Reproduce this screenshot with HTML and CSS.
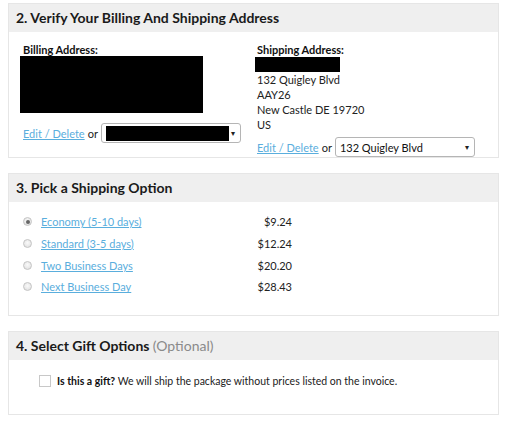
FILE: index.html
```html
<!DOCTYPE html>
<html>
<head>
<meta charset="utf-8">
<link rel="stylesheet" href="styles.css">
</head>
<body>
<div class="page">
  <section class="panel">
    <h2 class="panel-head">2. Verify Your Billing And Shipping Address</h2>
    <div class="panel-body addr-body">
      <div class="addr-col billing">
        <div class="addr-label">Billing Address:</div>
        <div class="redact redact-billing"></div>
        <div class="addr-actions">
          <a class="link" href="#">Edit / Delete</a><span class="or">or</span>
          <div class="select select-billing"><span class="redact redact-select"></span><span class="caret">&#9662;</span></div>
        </div>
      </div>
      <div class="addr-col shipping">
        <div class="addr-label">Shipping Address:</div>
        <div class="redact redact-name"></div>
        <div class="addr-lines">
          <div>132 Quigley Blvd</div>
          <div>AAY26</div>
          <div>New Castle DE 19720</div>
          <div>US</div>
        </div>
        <div class="addr-actions">
          <a class="link" href="#">Edit / Delete</a><span class="or">or</span>
          <div class="select select-shipping"><span class="select-text">132 Quigley Blvd</span><span class="caret">&#9662;</span></div>
        </div>
      </div>
    </div>
  </section>

  <section class="panel">
    <h2 class="panel-head">3. Pick a Shipping Option</h2>
    <div class="panel-body ship-body">
      <div class="ship-row"><span class="radio checked"></span><a class="link" href="#">Economy (5-10 days)</a><span class="price">$9.24</span></div>
      <div class="ship-row"><span class="radio"></span><a class="link" href="#">Standard (3-5 days)</a><span class="price">$12.24</span></div>
      <div class="ship-row"><span class="radio"></span><a class="link" href="#">Two Business Days</a><span class="price">$20.20</span></div>
      <div class="ship-row"><span class="radio"></span><a class="link" href="#">Next Business Day</a><span class="price">$28.43</span></div>
    </div>
  </section>

  <section class="panel">
    <h2 class="panel-head">4. Select Gift Options <span class="optional">(Optional)</span></h2>
    <div class="panel-body gift-body">
      <span class="checkbox"></span>
      <span class="gift-text"><b>Is this a gift?</b> We will ship the package without prices listed on the invoice.</span>
    </div>
  </section>
</div>
</body>
</html>
```

FILE: styles.css
```css
* { box-sizing: border-box; }
html, body { margin: 0; padding: 0; background: #fff; }
body {
  font-family: "Lato", "Open Sans", sans-serif;
  color: #222;
}
.page {
  padding: 3px 0 0 8px;
  width: 499px;
  display: flex;
  flex-direction: column;
  gap: 15px;
}
.panel {
  border: 1px solid #e6e6e6;
  background: #fff;
}
.panel-head {
  margin: 0;
  height: 28px;
  background: #efefef;
  padding: 0 0 0 7px;
  font-size: 14px;
  font-weight: 700;
  line-height: 27px;
  color: #1a1a1a;
}
.optional { font-weight: 400; color: #8a8a8a; }

.addr-body {
  display: grid;
  grid-template-columns: 235px 1fr;
  padding: 11px 0 0 11px;
  height: 125px;
}
.addr-col { display: flex; flex-direction: column; align-items: flex-start; }
.addr-label {
  font-size: 11px;
  font-weight: 700;
  line-height: 13px;
  padding-left: 3px;
  color: #111;
}
.shipping .addr-label { padding-left: 2px; }
.redact { background: #000; display: block; }
.redact-billing { width: 183px; height: 57px; margin-top: 0; }
.redact-name { width: 85px; height: 15px; margin-top: 1px; }
.addr-lines {
  font-size: 11px;
  line-height: 15px;
  padding-left: 2px;
  color: #222;
}
.addr-actions {
  display: flex;
  align-items: center;
  font-size: 11px;
  padding-left: 3px;
}
.billing .addr-actions { margin-top: 10px; }
.shipping .addr-actions { margin-top: 5px; padding-left: 2px; }
.link {
  color: #5aaedd;
  text-decoration: underline;
  font-size: 11px;
}
.or { margin: 0 3px 0 3px; color: #222; }
.select {
  height: 20px;
  width: 140px;
  border: 1px solid #b5b5b5;
  border-radius: 3px;
  display: flex;
  align-items: center;
  padding: 0 5px 0 4px;
  background: #fff;
}
.redact-select { width: 123px; height: 15px; }
.select-text { font-size: 11px; color: #111; flex: 1; }
.caret { font-size: 8px; margin-left: auto; color: #222; }

.ship-body { padding: 9px 0 16px 14px; height: 113px; }
.ship-row {
  display: flex;
  align-items: center;
  height: 21.7px;
}
.radio {
  width: 9px;
  height: 9px;
  border-radius: 50%;
  border: 1px solid #c4c4c4;
  background: radial-gradient(circle at 50% 40%, #fafafa, #dcdcdc);
  margin-right: 9px;
  position: relative;
}
.radio.checked::after {
  content: "";
  position: absolute;
  left: 1.5px; top: 1.5px;
  width: 4px; height: 4px;
  border-radius: 50%;
  background: #666;
}
.ship-row .link { width: 199px; }
.price {
  width: 52px;
  text-align: right;
  font-size: 11px;
  color: #222;
}

.gift-body {
  display: flex;
  align-items: center;
  padding: 0 0 0 30px;
  height: 54px;
}
.checkbox {
  width: 12px;
  height: 12px;
  border: 1px solid #c8c8c8;
  background: #fff;
  margin-right: 6px;
  margin-bottom: 12px;
}
.gift-text { font-size: 10.5px; color: #222; margin-bottom: 12px; }
.gift-text b { color: #111; }
```
